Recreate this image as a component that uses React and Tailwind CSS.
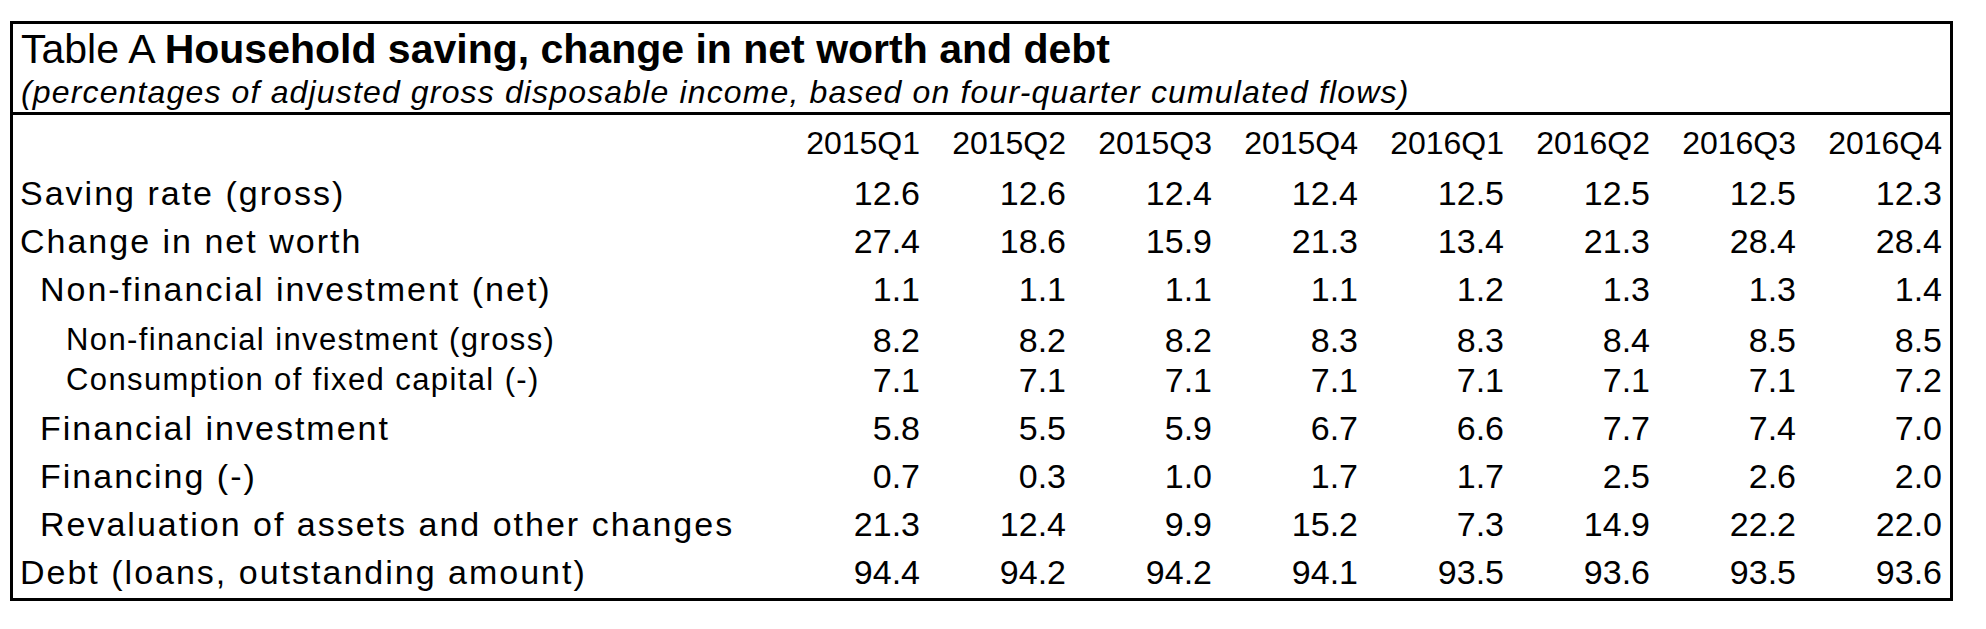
const quarters = ['2015Q1', '2015Q2', '2015Q3', '2015Q4', '2016Q1', '2016Q2', '2016Q3', '2016Q4'];

const rows = [
  { label: 'Saving rate (gross)', indent: 0, values: ['12.6', '12.6', '12.4', '12.4', '12.5', '12.5', '12.5', '12.3'] },
  { label: 'Change in net worth', indent: 0, values: ['27.4', '18.6', '15.9', '21.3', '13.4', '21.3', '28.4', '28.4'] },
  { label: 'Non-financial investment (net)', indent: 1, values: ['1.1', '1.1', '1.1', '1.1', '1.2', '1.3', '1.3', '1.4'] },
  {
    group: [
      { label: 'Non-financial investment (gross)', values: ['8.2', '8.2', '8.2', '8.3', '8.3', '8.4', '8.5', '8.5'] },
      { label: 'Consumption of fixed capital (-)', values: ['7.1', '7.1', '7.1', '7.1', '7.1', '7.1', '7.1', '7.2'] },
    ],
  },
  { label: 'Financial investment', indent: 1, values: ['5.8', '5.5', '5.9', '6.7', '6.6', '7.7', '7.4', '7.0'] },
  { label: 'Financing (-)', indent: 1, values: ['0.7', '0.3', '1.0', '1.7', '1.7', '2.5', '2.6', '2.0'] },
  { label: 'Revaluation of assets and other changes', indent: 1, values: ['21.3', '12.4', '9.9', '15.2', '7.3', '14.9', '22.2', '22.0'] },
  { label: 'Debt (loans, outstanding amount)', indent: 0, values: ['94.4', '94.2', '94.2', '94.1', '93.5', '93.6', '93.5', '93.6'] },
];

const gridCols = 'grid grid-cols-[761px_repeat(8,146px)] pr-[8px]';

function MainRow({ label, indent, values }) {
  return (
    <div className={`${gridCols} h-[48px] items-center text-[34px] leading-[48px]`}>
      <div className={`${indent ? 'pl-[27px]' : 'pl-[7px]'} tracking-[2px] whitespace-nowrap`}>{label}</div>
      {values.map((v, i) => (
        <div key={i} className="text-right">{v}</div>
      ))}
    </div>
  );
}

function SubRow({ label, values }) {
  return (
    <div className={`${gridCols} h-[40px] items-center text-[31px] leading-[40px]`}>
      <div className="pl-[53px] tracking-[1.4px] whitespace-nowrap">{label}</div>
      {values.map((v, i) => (
        <div key={i} className="text-right text-[34px]">{v}</div>
      ))}
    </div>
  );
}

export default function App() {
  return (
    <div className="w-[1986px] h-[629px] bg-white pt-[21px] pl-[10px] text-black font-['Liberation_Sans',Arial,sans-serif]">
      <div className="w-[1943px] border-[3px] border-black">
        <div className="pl-[8px] pt-[4px] border-b-[3px] border-black">
          <div className="text-[41px] leading-[42px] whitespace-nowrap">
            Table A <span className="font-bold">Household saving, change in net worth and debt</span>
          </div>
          <div className="pt-[3px] text-[32px] leading-[39px] italic tracking-[1.15px] whitespace-nowrap">
            (percentages of adjusted gross disposable income, based on four-quarter cumulated flows)
          </div>
        </div>
        <div className="pt-[3px] pb-[2px]">
          <div className={`${gridCols} h-[51px] items-center text-[32px] leading-[51px]`}>
            <div />
            {quarters.map((q) => (
              <div key={q} className="text-right">{q}</div>
            ))}
          </div>
          {rows.map((r, i) =>
            r.group ? (
              <div key={i} className="pt-[7px] pb-[4px]">
                {r.group.map((s) => (
                  <SubRow key={s.label} {...s} />
                ))}
              </div>
            ) : (
              <MainRow key={i} {...r} />
            )
          )}
        </div>
      </div>
    </div>
  );
}
